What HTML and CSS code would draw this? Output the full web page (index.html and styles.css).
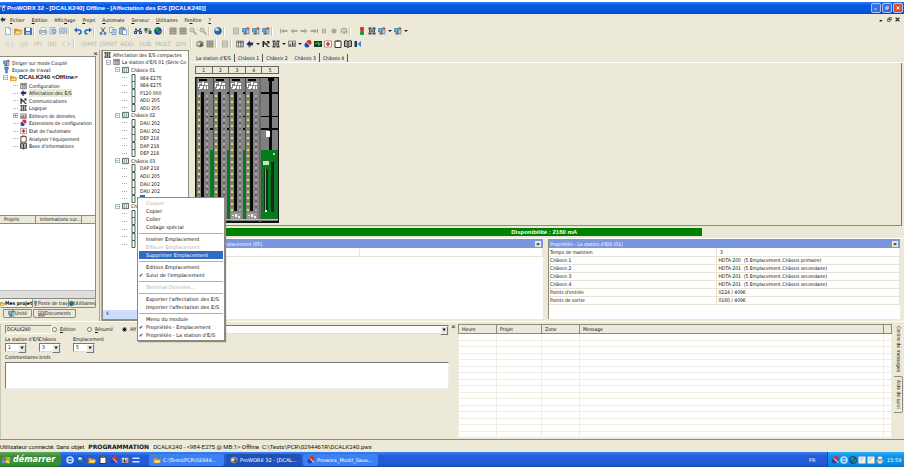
FILE: index.html
```html
<!DOCTYPE html>
<html lang="fr">
<head>
<meta charset="utf-8">
<title>ProWORX 32</title>
<link rel="stylesheet" href="styles.css">
</head>
<body>
<svg class="defs" aria-hidden="true">
  <symbol id="new" viewBox="0 0 16 16"><path d="M3 1h7l3 3v11H3z" fill="#fff" stroke="#57a"/><path d="M10 1v3h3" fill="#bcd" stroke="#57a"/></symbol>
  <symbol id="open" viewBox="0 0 16 16"><path d="M1 14V4h5l2 2h6v8z" fill="#e6a420" stroke="#a87414"/><path d="M1 14 4 8h12l-3 6z" fill="#ffe07a" stroke="#b8861c"/></symbol>
  <symbol id="save" viewBox="0 0 16 16"><path d="M1 2h13l1 1v12H1z" fill="#4a6cc8" stroke="#234"/><path d="M4 2h8v6H4z" fill="#fff"/><path d="M4 10h8v5H4z" fill="#bcd"/></symbol>
  <symbol id="print" viewBox="0 0 16 16"><path d="M4 1h8v6H4z" fill="#fff" stroke="#79a"/><path d="M1 7h14v6H1z" fill="#b7c5d2" stroke="#678"/><path d="M4 11h8v4H4z" fill="#fff" stroke="#79a"/></symbol>
  <symbol id="preview" viewBox="0 0 16 16"><path d="M2 1h10v13H2z" fill="#def" stroke="#68a"/><circle cx="10" cy="9" r="4" fill="#9cf" stroke="#456"/><path d="M4 4h6M4 6h4" stroke="#79b"/></symbol>
  <symbol id="book" viewBox="0 0 16 16"><path d="M1 3q4-2 7 0 4-2 7 0v10q-4-2-7 0-4-2-7 0z" fill="#cfe2f0" stroke="#57809c"/><path d="M8 3v10M3 6h3M10 6h3M3 9h3M10 9h3" stroke="#57809c"/></symbol>
  <symbol id="undo" viewBox="0 0 16 16"><path d="M3 6h7q4 0 4 4t-5 4" fill="none" stroke="#1a63c4" stroke-width="3"/><path d="M0 6 6 1v10z" fill="#1a63c4"/></symbol>
  <symbol id="redo" viewBox="0 0 16 16"><path d="M13 6H6q-4 0-4 4t5 4" fill="none" stroke="#1a63c4" stroke-width="3"/><path d="m16 6-6-5v10z" fill="#1a63c4"/></symbol>
  <symbol id="cut" viewBox="0 0 16 16"><path d="m4 1 7 10M12 1 5 11" stroke="#456" stroke-width="2"/><circle cx="4" cy="13" r="2" fill="none" stroke="#25a" stroke-width="2"/><circle cx="12" cy="13" r="2" fill="none" stroke="#25a" stroke-width="2"/></symbol>
  <symbol id="copy" viewBox="0 0 16 16"><path d="M1 1h8v10H1z" fill="#fff" stroke="#36a"/><path d="M6 5h8v10H6z" fill="#cfe2ff" stroke="#36a"/><path d="M8 8h4M8 11h4" stroke="#36a"/></symbol>
  <symbol id="paste" viewBox="0 0 16 16"><path d="M1 2h11v12H1z" fill="#8fb4e6" stroke="#357"/><path d="M4 1h5v3H4z" fill="#ccc" stroke="#555"/><path d="M7 6h8v9H7z" fill="#fff" stroke="#36a"/></symbol>
  <symbol id="find" viewBox="0 0 16 16"><path d="M2 3h4v4H2zM10 3h4v4h-4zM6 6h4v3H6zM0 8h6v6H0zM10 8h6v6h-6z" fill="#2c4c86"/><path d="M2 10h2v2H2zM12 10h2v2h-2z" fill="#9cf"/></symbol>
  <symbol id="swap" viewBox="0 0 16 16"><path d="M1 2h6v7H1zM9 7h6v7H9z" fill="#3c6a4e"/><path d="m9 3 4 1-3 2zM6 12l-4-1 3-2z" fill="#247"/></symbol>
  <symbol id="globe" viewBox="0 0 16 16"><circle cx="8" cy="8" r="7" fill="#1455c0" stroke="#123"/><path d="M4 3q5-2 6 1L8 8l-4 1zM9 9l4-2 1 3-4 4z" fill="#28a638"/></symbol>
  <symbol id="ball" viewBox="0 0 16 16"><circle cx="8" cy="8" r="7" fill="#2a6ab8" stroke="#1a3f78"/><ellipse cx="6" cy="5" rx="4" ry="3" fill="#b8e0ff"/></symbol>
  <symbol id="cube" viewBox="0 0 16 16"><path d="m1 4 7-3 7 3v8l-7 3-7-3z" fill="#8c8c84"/><path d="M3 5h5v5H3z" fill="#ddd"/><circle cx="11" cy="10" r="3" fill="#555"/></symbol>
  <symbol id="grid" viewBox="0 0 16 16"><path d="M1 1h14v14H1z" fill="#92907f"/><path d="M5 1v14M10 1v14M1 6h14M1 11h14" stroke="#b9b7a6"/></symbol>
  <symbol id="zoom" viewBox="0 0 16 16"><circle cx="6" cy="6" r="4" fill="#ddd9ca" stroke="#a3a193" stroke-width="2"/><path d="m9 9 6 6" stroke="#a3a193" stroke-width="3"/></symbol>
  <symbol id="pc" viewBox="0 0 16 16"><path d="M1 3h7v7H1z" fill="#59b5e0" stroke="#257"/><path d="M9 2h5v12H9z" fill="#9fd0e8" stroke="#368"/><path d="M3 11h6v4H3z" fill="#567"/><path d="m9 2 3-2 3 4-3 2z" fill="#e04030"/></symbol>
  <symbol id="dim" viewBox="0 0 16 16"><path d="M2 1h12v14H2z" fill="#b5b3a4"/><path d="M4 4h8M4 8h8M4 12h8" stroke="#dedbcc" stroke-width="2"/></symbol>
  <symbol id="left" viewBox="0 0 16 16"><path d="M1 8 7 3v3h8v4H7v3z" fill="#aaa89a"/></symbol>
  <symbol id="right" viewBox="0 0 16 16"><path d="M15 8 9 3v3H1v4h8v3z" fill="#aaa89a"/></symbol>
  <symbol id="first" viewBox="0 0 16 16"><path d="M0 3h2v10H0zM2 8l5-5v3h8v4H7v3z" fill="#aaa89a"/></symbol>
  <symbol id="last" viewBox="0 0 16 16"><path d="M14 3h2v10h-2zM14 8 9 3v3H1v4h8v3z" fill="#aaa89a"/></symbol>
  <symbol id="pause" viewBox="0 0 16 16"><path d="M4 3h3v10H4zM9 3h3v10H9z" fill="#aaa89a"/></symbol>
  <symbol id="rec" viewBox="0 0 16 16"><circle cx="8" cy="8" r="5" fill="#aaa89a"/></symbol>
  <symbol id="loop" viewBox="0 0 16 16"><path d="M3 12q-2-9 6-9 6 2 4 9" fill="none" stroke="#aaa89a" stroke-width="3"/><path d="M6 8h5v6H6z" fill="#aaa89a"/></symbol>
  <symbol id="light" viewBox="0 0 16 16"><path d="M5 0h6v16H5z" fill="#263"/><circle cx="8" cy="4" r="4" fill="#e03020"/><circle cx="8" cy="12" r="4" fill="#1b9a2c"/></symbol>
  <symbol id="net" viewBox="0 0 16 16"><path d="M1 1h5v4H1zM10 1h5v4h-5zM1 11h5v4H1zM10 11h5v4h-5z" fill="#454545"/><path d="M8 1v14M4 8h8M3 5v6M13 5v6" stroke="#454545" stroke-width="2"/></symbol>
  <symbol id="plc" viewBox="0 0 16 16"><path d="M1 2h14v11H1z" fill="#d7d3c6" stroke="#333"/><path d="M3 8h3v4H3z" fill="#c33"/><path d="M9 4v8M12 6v6" stroke="#356" stroke-width="2"/></symbol>
  <symbol id="rack" viewBox="0 0 16 16"><path d="M1 2h14v12H1z" fill="#ddd" stroke="#333"/><path d="M5 2v12M9 2v12M12 2v12M2 5h12" stroke="#333"/></symbol>
  <symbol id="arrowio" viewBox="0 0 16 16"><path d="m1 8 7-7v4h7l-2 6H9l-1 4z" fill="#1b2f66"/><path d="M5 11h4v4H5z" fill="#886"/></symbol>
  <symbol id="logic" viewBox="0 0 16 16"><path d="M1 2h3l8 10h3v2h-4L4 5v9H1zM9 2h6v5h-3z" fill="#222"/><path d="M4 8h8" stroke="#222" stroke-width="2"/></symbol>
  <symbol id="chart" viewBox="0 0 16 16"><path d="M1 3h14v11H1z" fill="#ece8e0" stroke="#534"/><path d="M4 7v6M7 5v8" stroke="#257" stroke-width="2"/><path d="M12 5v8M9 9v4" stroke="#b33" stroke-width="2"/></symbol>
  <symbol id="ext" viewBox="0 0 16 16"><circle cx="6" cy="10" r="5" fill="#1d46b4"/><circle cx="10" cy="5" r="5" fill="#d03030"/><path d="m6 5 8 8" stroke="#fff" stroke-width="2"/></symbol>
  <symbol id="screen" viewBox="0 0 16 16"><path d="M0 2h16v12H0z" fill="#1b3a28"/><path d="M2 7h4l2-3 2 7 1-4h3" stroke="#3c6" fill="none" stroke-width="2"/></symbol>
  <symbol id="health" viewBox="0 0 16 16"><path d="M1 2h14v12H1z" fill="#fff" stroke="#533"/><path d="M8 4v8M4 8h8" stroke="#d22" stroke-width="3"/></symbol>
  <symbol id="clip" viewBox="0 0 16 16"><path d="M2 2h12v13H2z" fill="#fff" stroke="#432" stroke-width="2"/><path d="M5 0h6v4H5z" fill="#765"/></symbol>
  <symbol id="info" viewBox="0 0 16 16"><path d="M1 2q4-2 7 1 4-3 7-1v11q-4-1-7 2-4-3-7-2z" fill="#aaa" stroke="#333" stroke-width="2"/><path d="M8 3v11" stroke="#333" stroke-width="2"/></symbol>
  <symbol id="flow" viewBox="0 0 16 16"><path d="M1 2h5v12H1z" fill="#236"/><path d="m7 8 7-6v12z" fill="#3a80d0"/></symbol>
  <symbol id="funnel" viewBox="0 0 16 16"><path d="M4 1h8v5l-2 3v6H6V9L4 6z" fill="#4a90dc" stroke="#246"/></symbol>
  <symbol id="chassis" viewBox="0 0 16 16"><path d="M1 2h14v12H1z" fill="#e8efe8" stroke="#455" stroke-width="2"/><path d="M5 2v12M10 2v12" stroke="#7a9a86" stroke-width="2"/></symbol>
  <symbol id="module" viewBox="0 0 16 16"><path d="M5 1h6v14H5z" fill="#fff" stroke="#465" stroke-width="2"/></symbol>
  <symbol id="win" viewBox="0 0 16 16"><path d="m1 3 6-1-1 5-6 1z" fill="#f05a28"/><path d="m8 2 7 1-1 5-7-1z" fill="#8bd33c"/><path d="m0 9 6-1-1 5-5 1z" fill="#4aa0f0"/><path d="m7 8 7 1-1 5-7-1z" fill="#ffd034"/></symbol>
  <symbol id="ie" viewBox="0 0 16 16"><circle cx="8" cy="8" r="6" fill="none" stroke="#b6e4ff" stroke-width="3"/><path d="M3 8h10" stroke="#fff" stroke-width="2"/></symbol>
  <symbol id="desk" viewBox="0 0 16 16"><path d="M1 3h14v3H1zM1 10h14v3H1z" fill="#cfe4ff"/></symbol>
  <symbol id="sheet" viewBox="0 0 16 16"><path d="M1 1h14v14H1z" fill="#f4f2e8"/><path d="M4 4h8M4 8h6" stroke="#a99" stroke-width="1"/></symbol>
</svg>

<header class="title">
  <svg class="ic" viewBox="0 0 16 16"><path d="M1 1h14v5H1zM6 6h6v9H6z" fill="#d8e4f4"/><path d="M3 3h4v2H3zM8 8h3v5H8z" fill="#345"/></svg>
  <h1>ProWORX 32 - [DCALK240] Offline - [Affectation des E/S [DCALK240]]</h1>
  <button class="wb" aria-label="Réduire"><svg viewBox="0 0 8 8"><path d="M1 5h4v2H1z" fill="#fff"/></svg></button>
  <button class="wb" aria-label="Restaurer"><svg viewBox="0 0 8 8"><path d="M3 1h4v4H3zM1 3h4v4H1z" fill="none" stroke="#fff"/></svg></button>
  <button class="wb close" aria-label="Fermer"><svg viewBox="0 0 8 8"><path d="m1 1 6 6M7 1 1 7" stroke="#fff" stroke-width="2"/></svg></button>
</header>

<nav class="menubar">
  <svg class="ic"><use href="#arrowio"/></svg>
  <button><u>F</u>ichier</button><button><u>E</u>dition</button><button>Affic<u>h</u>age</button><button><u>P</u>rojet</button><button><u>A</u>utomate</button><button><u>S</u>erveur</button><button><u>U</u>tilitaires</button><button>Fe<u>n</u>être</button><button><u>?</u></button>
  <span class="mdi"><svg viewBox="0 0 8 8"><path d="M1 5h4v2H1z"/></svg><svg viewBox="0 0 8 8"><path d="M3 1h4v3H3zM1 3h4v4H1z" fill="none" stroke="#222"/></svg><svg viewBox="0 0 8 8"><path d="m1 1 6 6M7 1 1 7" stroke="#222" stroke-width="2"/></svg></span>
</nav>

<div class="toolbar">
  <button aria-label="Nouveau"><svg><use href="#new"/></svg></button><button aria-label="Ouvrir"><svg><use href="#open"/></svg></button><button aria-label="Enregistrer"><svg><use href="#save"/></svg></button><i></i>
  <button aria-label="Imprimer"><svg><use href="#print"/></svg></button><button aria-label="Aperçu"><svg><use href="#preview"/></svg></button><button aria-label="Rapport"><svg><use href="#book"/></svg></button><i></i>
  <button aria-label="Annuler"><svg><use href="#undo"/></svg></button><button aria-label="Rétablir"><svg><use href="#redo"/></svg></button><i></i>
  <button aria-label="Couper"><svg><use href="#cut"/></svg></button><button aria-label="Copier"><svg><use href="#copy"/></svg></button><button aria-label="Coller"><svg><use href="#paste"/></svg></button><i></i>
  <button aria-label="Rechercher"><svg><use href="#find"/></svg></button><button aria-label="Remplacer"><svg><use href="#swap"/></svg></button><button aria-label="Réseau"><svg><use href="#globe"/></svg></button><i></i>
  <button aria-label="Grille"><svg><use href="#grid"/></svg></button><button aria-label="Table"><svg><use href="#grid"/></svg></button><button aria-label="Zoom avant"><svg><use href="#zoom"/></svg></button><button aria-label="Zoom arrière"><svg><use href="#zoom"/></svg></button><i></i>
  <button aria-label="Aide"><svg><use href="#ball"/></svg></button><i class="wide"></i>
  <button aria-label="Arrêt"><svg><use href="#dim"/></svg></button><button aria-label="Lire"><svg><use href="#pc"/></svg></button><button aria-label="Écrire"><svg><use href="#pc"/></svg></button><button aria-label="Comparer"><svg><use href="#pc"/></svg></button><i class="wide"></i>
  <button aria-label="Premier"><svg><use href="#first"/></svg></button><button aria-label="Précédent"><svg><use href="#left"/></svg></button><button aria-label="Suivant"><svg><use href="#right"/></svg></button><button aria-label="Dernier"><svg><use href="#last"/></svg></button><button aria-label="Pause"><svg><use href="#pause"/></svg></button><button aria-label="Marche"><svg><use href="#rec"/></svg></button><button aria-label="Boucle"><svg><use href="#loop"/></svg></button><i class="wide"></i>
  <button aria-label="Mode"><svg><use href="#light"/></svg></button><button aria-label="Liaison"><svg><use href="#net"/></svg></button><button aria-label="Poste"><svg><use href="#pc"/></svg></button><b class="caret"></b><button aria-label="Transfert"><svg><use href="#pc"/></svg></button><b class="caret"></b>
</div>

<div class="toolbar second">
  <button class="t">-| |-</button><button class="t">-|/|-</button><button class="t">(P)</button><button class="t">(N)</button><button class="t">-( )-</button><i></i>
  <button class="t w">-SHRT</button><button class="t w">|SHRT</button><button class="t m">ADD</button><button class="t m">SUB</button><button class="t m">MULT</button><button class="t m">DIV</button><i></i>
  <button aria-label="Module"><svg><use href="#cube"/></svg></button><button aria-label="Bloc"><svg><use href="#grid"/></svg></button><i></i><button aria-label="Feuille"><svg><use href="#dim"/></svg></button><i></i>
  <button aria-label="Configuration"><svg><use href="#rack"/></svg></button><button aria-label="Affectation"><svg><use href="#arrowio"/></svg></button><b class="caret"></b>
  <button aria-label="Communications"><svg><use href="#logic"/></svg></button><button aria-label="Logique"><svg><use href="#net"/></svg></button><b class="caret"></b>
  <button aria-label="Données"><svg><use href="#plc"/></svg></button><b class="caret"></b>
  <button aria-label="Extensions"><svg><use href="#ext"/></svg></button><button aria-label="Écran"><svg><use href="#screen"/></svg></button><button aria-label="État"><svg><use href="#health"/></svg></button><button aria-label="Analyser"><svg><use href="#clip"/></svg></button><button aria-label="Informations"><svg><use href="#info"/></svg></button><button aria-label="Échanges"><svg><use href="#flow"/></svg></button>
</div>

<main class="work">
  <aside class="dock">
    <div class="grip">×</div>
    <div class="dockbody">
      <ul class="tree">
        <li><svg><use href="#pc"/></svg>Diriger sur mode Couplé</li>
        <li><svg><use href="#funnel"/></svg>Espace de travail</li>
        <li class="l1"><em>−</em><svg><use href="#open"/></svg><strong>DCALK240 &lt;Offline&gt;</strong></li>
        <li class="l2"><em></em><svg><use href="#rack"/></svg>Configuration</li>
        <li class="l2"><em></em><svg><use href="#arrowio"/></svg><span class="cur">Affectation des E/S</span></li>
        <li class="l2"><em></em><svg><use href="#logic"/></svg>Communications</li>
        <li class="l2"><em></em><svg><use href="#net"/></svg>Logique</li>
        <li class="l2"><em>+</em><svg><use href="#chart"/></svg>Editeurs de données</li>
        <li class="l2"><em></em><svg><use href="#ext"/></svg>Extensions de configuration</li>
        <li class="l2"><em></em><svg><use href="#health"/></svg>Etat de l'automate</li>
        <li class="l2"><em></em><svg><use href="#clip"/></svg>Analyser l'équipement</li>
        <li class="l2"><em></em><svg><use href="#info"/></svg>Base d'informations</li>
      </ul>
      <div class="cols"><span>Projets</span><span>Informations sur...</span><span></span></div>
      <div class="list"></div>
      <div class="hbar"></div>
    </div>
    <div class="docktabs">
      <button class="on"><svg><use href="#open"/></svg>Mes projet</button><button><svg><use href="#funnel"/></svg>Poste de trav</button><button><svg><use href="#globe"/></svg>Utilitaires</button>
    </div>
    <div class="docktabs low">
      <button><svg><use href="#pc"/></svg>Unité</button><button><svg><use href="#chart"/></svg>Documents</button>
    </div>
  </aside>

  <section class="iotree">
    <ul class="tree big">
      <li><svg><use href="#net"/></svg>Affectation des E/S compactes</li>
      <li class="l1"><em>−</em><svg><use href="#rack"/></svg>La station d'E/S 01 (Série Co</li>
      <li class="l3"><em>−</em><svg><use href="#chassis"/></svg>Châssis 01</li>
      <li class="l4"><em></em><svg><use href="#module"/></svg>984-E275</li>
      <li class="l4"><em></em><svg><use href="#module"/></svg>984-E275</li>
      <li class="l4"><em></em><svg><use href="#module"/></svg>P120 000</li>
      <li class="l4"><em></em><svg><use href="#module"/></svg>ADU 205</li>
      <li class="l4"><em></em><svg><use href="#module"/></svg>ADU 205</li>
      <li class="l3"><em>−</em><svg><use href="#chassis"/></svg>Châssis 02</li>
      <li class="l4"><em></em><svg><use href="#module"/></svg>DAU 202</li>
      <li class="l4"><em></em><svg><use href="#module"/></svg>DAU 202</li>
      <li class="l4"><em></em><svg><use href="#module"/></svg>DEP 218</li>
      <li class="l4"><em></em><svg><use href="#module"/></svg>DAP 218</li>
      <li class="l4"><em></em><svg><use href="#module"/></svg>DEP 218</li>
      <li class="l3"><em>−</em><svg><use href="#chassis"/></svg>Châssis 03</li>
      <li class="l4"><em></em><svg><use href="#module"/></svg>DAP 218</li>
      <li class="l4"><em></em><svg><use href="#module"/></svg>ADU 205</li>
      <li class="l4"><em></em><svg><use href="#module"/></svg>DAU 202</li>
      <li class="l4"><em></em><svg><use href="#module"/></svg>DAU 202</li>
      <li class="l4"><em></em><svg><use href="#module"/></svg><span class="sel"></span></li>
      <li class="l3"><em>−</em><svg><use href="#chassis"/></svg>Ch</li>
      <li class="l4"><em></em><svg><use href="#module"/></svg></li>
      <li class="l4"><em></em><svg><use href="#module"/></svg></li>
      <li class="l4"><em></em><svg><use href="#module"/></svg></li>
      <li class="l4"><em></em><svg><use href="#module"/></svg></li>
      <li class="l4"><em></em><svg><use href="#module"/></svg></li>
    </ul>
    <div class="scroll"><span>‹</span></div>
    <menu class="context">
      <li class="off">Couper</li><li>Copier</li><li>Coller</li><li>Collage spécial</li>
      <li class="sep"></li>
      <li>Insérer Emplacement</li><li class="off">Effacer Emplacement</li><li class="hot">Supprimer Emplacement</li>
      <li class="sep"></li>
      <li>Edition Emplacement</li><li class="chk">Suivi de l'emplacement</li>
      <li class="sep"></li>
      <li class="off">Terminal Données...</li>
      <li class="sep"></li>
      <li>Exporter l'affectation des E/S</li><li>Importer l'affectation des E/S</li>
      <li class="sep"></li>
      <li>Menu du module</li><li class="chk">Propriétés - Emplacement</li><li class="chk">Propriétés - La station d'E/S</li>
    </menu>
  </section>

  <section class="view">
    <div class="tabs"><button>La station d'E/S</button><button>Châssis 1</button><button class="nb">Châssis 2</button><button class="on">Châssis 3</button><button>Châssis 4</button></div>
    <div class="page">
      <div class="slots"><span>1</span><span>2</span><span>3</span><span>4</span><span>5</span></div>
      <svg class="chassis" viewBox="0 0 84 146" role="img" aria-label="Châssis 3">
        <defs>
          <pattern id="led" width="14" height="6" patternUnits="userSpaceOnUse" y="17"><rect x="2" y="1" width="2" height="2" fill="#e0e43c"/><rect x="2" y="4" width="2" height="1" fill="#666"/><circle cx="11" cy="2" r="1" fill="#b5b5b5"/><circle cx="11" cy="5" r="1" fill="#5c5c5c"/></pattern>
          <g id="mod">
            <path d="M0 1h14v143H0z" fill="#838383"/><path d="M0 1h1v143H0z" fill="#4a4a4a"/>
            <path d="M3 2h8v2H3z" fill="#000"/><path d="M2 6h3v1H3v3H2zM6 5h2v3H6zM9 6h3v2H9zM4 9h3v2H4zM8 9h2v3H8zM3 11h3v1H3zM11 9h1v3h-1z" fill="#fff"/>
            <path d="M0 17h14v118H0z" fill="url(#led)"/>
            <path d="M5 15h3v119H5z" fill="#080808"/><path d="M2 136h10v7H2z" fill="#9a9a9a"/><path d="M3 138h2v1H3zM6 137h2v3H6zM9 139h2v2H9z" fill="#eee"/>
          </g>
        </defs>
        <path d="M0 0h84v146H0z" fill="#111"/><path d="M1 1h82v143H1z" fill="#808080"/>
        <path d="M0 15h84v2H0zM0 39h84v1H0zM0 51h84v2H0zM74 1h3v73h-3z" fill="#080808"/>
        <path d="M1 73h82v69H1z" fill="#087a20"/>
        <use href="#mod" x="1"/><use href="#mod" x="18"/><use href="#mod" x="34"/><use href="#mod" x="50"/>
        <path d="M64 1h2v144h-2z" fill="#6a6a6a"/><path d="M71 54h4v6h-4z" fill="#fff"/><path d="M73 1h6v3h-6z" fill="#000"/>
        <circle cx="79" cy="77" r="1" fill="#eee"/><path d="M68 84h6v4h-6z" fill="#cde0cd"/><path d="M69 92h4v42h-4zM76 85h3v50h-3z" fill="#162a18"/><path d="M70 92h1v42h-1z" fill="#5b8"/><path d="M70 133h2v2h-2z" fill="#fff"/>
        <path d="M1 142h82v1H1z" fill="#bbb"/>
      </svg>
    </div>
    <div class="power"><div class="fill">Disponibilité : 2160 mA</div></div>
    <div class="props">
      <section class="prop">
        <h2>Propriétés - Emplacement (05)<button aria-label="Fermer">×</button></h2>
        <table><tr><td></td><td></td></tr></table>
      </section>
      <section class="prop wide">
        <h2>Propriétés - La station d'E/S (01)<button aria-label="Fermer">×</button></h2>
        <table>
          <tr><td>Temps de maintien</td><td>&nbsp;3</td></tr>
          <tr><td>Châssis 1</td><td>HDTA-200&nbsp; (5 Emplacement Châssis primaire)</td></tr>
          <tr><td>Châssis 2</td><td>HDTA-201&nbsp; (5 Emplacement Châssis secondaire)</td></tr>
          <tr><td>Châssis 3</td><td>HDTA-201&nbsp; (5 Emplacement Châssis secondaire)</td></tr>
          <tr><td>Châssis 4</td><td>HDTA-201&nbsp; (5 Emplacement Châssis secondaire)</td></tr>
          <tr><td>Points d'entrée</td><td>0224 / 4096</td></tr>
          <tr><td>Points de sortie</td><td>0160 / 4096</td></tr>
        </table>
      </section>
    </div>
  </section>
</main>

<section class="bottom">
  <form class="editor">
    <div class="line">
      <output class="sunk">DCALK240</output>
      <label><input type="radio" name="m"><span><u>E</u>dition</span></label>
      <label><input type="radio" name="m"><span><u>R</u>ésumé</span></label>
      <label><input type="radio" name="m" checked><span>Aff</span></label>
      <span class="pick grow"><select aria-label="Adresse"><option></option></select></span>
    </div>
    <div class="fields">
      <label>La station d'E/S<span class="pick"><select><option>1</option></select></span></label>
      <label>Châssis<span class="pick"><select><option>3</option></select></span></label>
      <label>Emplacement<span class="pick"><select><option>5</option></select></span></label>
    </div>
    <label class="notes">Commentaires brefs<textarea></textarea></label>
  </form>
  <div class="grip">×</div>
  <table class="msgs">
    <colgroup><col class="c1"><col class="c2"><col class="c3"><col><col class="c5"></colgroup>
    <thead><tr><th>Heure</th><th>Projet</th><th>Zone</th><th>Message</th><th></th></tr></thead>
    <tbody>
      <tr><td></td><td></td><td></td><td></td><td></td></tr><tr><td></td><td></td><td></td><td></td><td></td></tr>
      <tr><td></td><td></td><td></td><td></td><td></td></tr><tr><td></td><td></td><td></td><td></td><td></td></tr>
      <tr><td></td><td></td><td></td><td></td><td></td></tr><tr><td></td><td></td><td></td><td></td><td></td></tr>
      <tr><td></td><td></td><td></td><td></td><td></td></tr><tr><td></td><td></td><td></td><td></td><td></td></tr>
      <tr><td></td><td></td><td></td><td></td><td></td></tr><tr><td></td><td></td><td></td><td></td><td></td></tr>
      <tr><td></td><td></td><td></td><td></td><td></td></tr><tr><td></td><td></td><td></td><td></td><td></td></tr>
      <tr><td></td><td></td><td></td><td></td><td></td></tr><tr><td></td><td></td><td></td><td></td><td></td></tr>
      <tr><td></td><td></td><td></td><td></td><td></td></tr><tr><td></td><td></td><td></td><td></td><td></td></tr>
    </tbody>
  </table>
  <div class="vtabs"><button class="on">Centre de messages</button><button>Aide de suivi</button></div>
</section>

<footer class="status"><span>Utilisateur connecté: Sans objet</span><strong>PROGRAMMATION</strong><span>DCALK240 - &lt;984-E275 @ MB:1&gt; Offline&nbsp; C:\Tests\PCR\0294461R\DCALK240.pwx</span></footer>

<nav class="taskbar">
  <button class="start"><svg><use href="#win"/></svg>démarrer</button>
  <div class="quick"><svg><use href="#ie"/></svg><svg><use href="#ball"/></svg><svg><use href="#open"/></svg><svg><use href="#clip"/></svg><svg><use href="#ext"/></svg><svg><use href="#chart"/></svg><svg><use href="#desk"/></svg></div>
  <div class="tasks"><button><svg><use href="#open"/></svg>C:\Tests\PCR\02944...</button><button class="on"><svg><use href="#cube"/></svg>ProWORX 32 - [DCAL...</button><button><svg><use href="#ext"/></svg>Proworx_Modif_Sauv...</button></div>
  <span class="lang">FR</span>
  <div class="tray"><svg><use href="#ext"/></svg><svg><use href="#ie"/></svg><svg><use href="#globe"/></svg><svg><use href="#sheet"/></svg><svg><use href="#sheet"/></svg><svg><use href="#print"/></svg><time>15:59</time></div>
</nav>
</body>
</html>
```
FILE: styles.css
```css
* { box-sizing: border-box; }
html, body { height: 100%; }
body {
  --face: #ece9d8;
  --line: #8e8b7c;
  --small: "DejaVu Sans Condensed", "DejaVu Sans", sans-serif;
  --ui: "Liberation Sans", sans-serif;
  margin: 0;
  padding: 2px 3px 0 0;
  display: flex;
  flex-direction: column;
  background: #fff;
  color: #111;
  font: 5px/8px var(--small);
  white-space: nowrap;
  overflow: hidden;
}
button, input, select, textarea, table { font: inherit; color: inherit; }
button { margin: 0; padding: 0; border: 0; background: none; }
ul, menu { margin: 0; padding: 0; list-style: none; }
h1, h2 { margin: 0; font: inherit; }
svg { display: block; flex: none; width: 8px; height: 8px; }
.defs { position: absolute; width: 0; height: 0; }

.title {
  flex: none;
  display: flex;
  align-items: center;
  gap: 1px;
  height: 12px;
  padding-right: 1px;
  background: linear-gradient(#2b7cf4, #0855e2 30%, #0455e0 80%, #0347c4);
  color: #fff;
}
.title .ic { width: 6px; }
.title h1 { flex: 1; font: bold 6px/8px var(--ui); }
.wb { width: 10px; height: 10px; padding: 2px; border: 1px solid #a9c3f5; border-radius: 2px; background: #3a6fe2; }
.wb svg { width: 4px; height: 4px; }
.wb.close { background: #dd4f2b; }

.menubar { flex: none; display: flex; align-items: center; gap: 7px; height: 11px; padding-right: 4px; background: var(--face); }
.menubar .ic { width: 6px; height: 7px; margin-right: -3px; }
.mdi { display: flex; gap: 3px; margin-left: auto; }
.mdi svg { width: 5px; height: 5px; }

.toolbar { flex: none; display: flex; align-items: center; height: 12px; padding-left: 3px; background: var(--face); }
.toolbar.second { height: 13px; }
.toolbar button { display: flex; justify-content: center; width: 10px; }
.toolbar i { width: 5px; height: 9px; border-left: 1px solid #c9c6b5; background: linear-gradient(90deg, #fff 1px, transparent 1px); }
.toolbar i.wide { width: 8px; }
.toolbar .t { width: 14px; color: #b9b6a6; font: 6px/8px "DejaVu Sans", sans-serif; }
.toolbar .w { width: 20px; }
.toolbar .m { width: 18px; }
.caret { width: 4px; height: 2px; margin: 0 1px; border: 2px solid transparent; border-top-color: #222; border-bottom: 0; }

.work { flex: 1; display: flex; min-height: 0; background: var(--face); }
.dock { flex: none; width: 102px; display: flex; flex-direction: column; border-right: 3px double #aaa797; }
.grip { font: 8px/7px var(--ui); }
.dock .grip { height: 6px; text-align: right; padding-right: 1px; }
.dockbody { flex: 1; display: flex; flex-direction: column; width: 96px; background: #fff; border: 1px solid var(--line); border-left: 0; }
.tree { display: grid; grid-auto-rows: 1fr; height: 91px; margin-top: 2px; overflow: hidden; }
.tree.big { height: 197px; }
.iotree .tree { margin-top: 0; }
.tree li { display: flex; align-items: center; gap: 1px; min-height: 0; padding-left: 3px; }
.tree li svg { width: 7px; height: 8px; margin-right: 1px; }
.tree em {
  flex: none; width: 5px; height: 5px; border: 1px solid #aeb6c0; background: #fff;
  font: 5px/3px var(--ui); text-align: center; margin-right: 1px;
}
.tree em:empty { height: 1px; border: 0; border-top: 1px dotted #aaa; }
.tree .l1 { padding-left: 3px; }
.tree .l2 { padding-left: 13px; }
.tree strong { font: bold 6px/7px var(--ui); }
.cur { background: var(--face); }
.sel { width: 5px; height: 7px; background: #316ac5; }
.cols { display: flex; height: 9px; margin-top: auto; background: var(--face); border: 1px solid var(--line); border-width: 1px 0; line-height: 7px; }
.cols span { padding-left: 4px; border-right: 1px solid var(--line); }
.cols span:first-child { width: 36px; }
.cols span:nth-child(2) { width: 46px; }
.cols span:last-child { border: 0; }
.list { height: 66px; }
.hbar { height: 8px; background: #dedede; border-top: 1px solid #bbb; }
.docktabs { display: flex; height: 10px; }
.docktabs button { display: flex; align-items: center; height: 9px; border: 1px solid var(--line); border-top-color: transparent; border-left: 0; border-radius: 0 0 2px 2px; line-height: 7px; }
.docktabs .on { font-weight: bold; background: #f8f7f1; }
.docktabs svg { width: 5px; height: 7px; }
.docktabs.low { height: 12px; padding-left: 3px; gap: 1px; }
.docktabs.low button { padding: 0 4px; border: 1px solid var(--line); }
.docktabs.low svg { width: 7px; }

.iotree { flex: none; position: relative; width: 87px; display: flex; flex-direction: column; background: #fff; border: 1px solid var(--line); border-bottom-width: 2px; }
.iotree .tree li { padding-left: 1px; }
.iotree .tree .l1 { padding-left: 3px; }
.iotree .tree .l3 { padding-left: 12px; }
.iotree .tree .l4 { padding-left: 19px; }
.iotree .tree .l4 svg { width: 9px; }
.scroll { height: 9px; margin-top: auto; background: #cfdcfb; border-radius: 1px; color: #36a; font: bold 9px/7px var(--ui); padding-left: 3px; }
.context {
  position: absolute; z-index: 5; left: 34px; top: 146px; width: 88px; padding: 1px;
  background: #fff; border: 1px solid #8c8a80; box-shadow: 1px 1px 1px #888;
  font: 5px/8px "DejaVu Sans", sans-serif;
}
.context li { height: 8px; padding-left: 7px; }
.context .off { color: #b5b2a4; }
.context .hot { background: #316ac5; color: #fff; }
.context .sep { height: 4px; padding: 0; background: linear-gradient(#b5b2a4, #b5b2a4) center / 84px 1px no-repeat; }
.context .chk { padding-left: 0; }
.context .chk::before { content: "✔"; display: inline-block; width: 7px; line-height: 7px; }

.view { flex: 1; min-width: 0; display: flex; flex-direction: column; padding-left: 2px; }
.tabs { display: flex; align-items: flex-end; height: 13px; padding-left: 3px; border-bottom: 1px solid #fff; }
.tabs button { padding: 0 3px 0 2px; height: 8px; border-right: 1px solid #555; margin-right: 1px; }
.tabs .nb { border-color: transparent; }
.tabs .on { height: 9px; }
.page { flex: 1; padding: 3px 4px 0; margin-right: 2px; border-right: 1px solid #777; border-bottom: 1px solid var(--line); overflow: hidden; }
.slots { display: flex; width: 84px; height: 8px; border: 1px solid #666; line-height: 6px; text-align: center; margin-bottom: 3px; }
.slots span { flex: 1; border-right: 1px solid #666; }
.slots span:last-child { border: 0; }
.page .chassis { width: 84px; height: 146px; }
.power { padding: 2px 3px 2px 0; border-bottom: 1px solid #fff; }
.fill { width: 72%; height: 8px; padding-right: 125px; text-align: right; background: #008000; color: #fff; font: bold 6px/8px var(--ui); }
.props { flex: none; display: flex; gap: 5px; height: 80px; padding-right: 4px; margin-bottom: 2px; }
.prop { flex: 1; background: #fff; border-left: 1px solid var(--line); }
.prop h2 { display: flex; justify-content: space-between; align-items: center; height: 9px; padding: 0 2px 0 1px; background: #7a96df; color: #fff; }
.prop h2 button { width: 6px; height: 6px; background: var(--face); color: #000; font: bold 6px/6px var(--ui); }
.prop table { width: 100%; border-spacing: 0; table-layout: fixed; padding-top: 1px; }
.prop td { height: 8px; padding: 0 0 0 1px; line-height: 7px; border-bottom: 1px solid #e6e3d6; border-right: 1px solid #e6e3d6; }
.prop td:first-child { width: 48%; }

.bottom { flex: none; display: flex; height: 119px; padding-top: 2px; background: var(--face); border-top: 1px solid #fff; border-bottom: 1px solid var(--line); }
.editor { flex: 1; min-width: 0; padding-left: 4px; border-left: 1px solid #c9c6b5; }
.line { display: flex; align-items: center; height: 10px; }
.sunk { width: 47px; height: 9px; padding-left: 1px; border: 1px solid var(--line); border-right-color: #fff; border-bottom-color: #fff; line-height: 7px; }
.line label { display: flex; align-items: center; gap: 3px; width: 35px; }
.line input { appearance: none; margin: 0; width: 5px; height: 5px; border: 1px solid #777; border-radius: 50%; background: #fff; }
.line input:checked { background: radial-gradient(#000 1px, #fff 2px); }
.pick { position: relative; display: block; width: 22px; height: 9px; }
.pick.grow { flex: 1; width: auto; }
.pick select { display: block; appearance: none; width: 100%; height: 9px; padding: 0 2px; background: #fff; border: 1px solid; border-color: #777 #ddd #ddd #777; border-radius: 0; line-height: 7px; }
.pick::after { content: "▼"; position: absolute; right: 1px; top: 1px; width: 6px; height: 7px; background: var(--face); border: 1px solid; border-color: #fff #777 #777 #fff; font: 4px/5px "DejaVu Sans", sans-serif; text-align: center; pointer-events: none; }
.fields { display: flex; gap: 12px; padding-top: 1px; }
.fields label { width: 22px; }
.notes { display: block; padding-top: 1px; }
.notes textarea { display: block; width: 100%; height: 27px; margin: 1px 0 0; padding: 1px; resize: none; background: #fff; border: 1px solid; border-color: #777 #eee #eee #777; border-radius: 0; }
.bottom .grip { width: 9px; padding-left: 2px; line-height: 6px; }
.msgs { flex: none; width: 48%; height: 114px; table-layout: fixed; border-collapse: collapse; background: #fff; border: 1px solid var(--line); }
.msgs th { height: 9px; padding: 0 0 0 3px; background: var(--face); border: 1px solid var(--line); font-weight: normal; text-align: left; line-height: 7px; }
.msgs td { padding: 0; border: 1px solid #efede2; }
.c1 { width: 38px; }
.c2 { width: 45px; }
.c3 { width: 38px; }
.c5 { width: 8px; }
.vtabs { width: 12px; display: flex; flex-direction: column; align-items: flex-start; padding-left: 2px; }
.vtabs button { writing-mode: vertical-rl; width: 9px; padding: 3px 0; border: 1px solid var(--line); border-left: 0; border-radius: 0 2px 2px 0; line-height: 7px; }
.vtabs .on { border-color: transparent; padding-top: 1px; }

.status { flex: none; display: flex; align-items: center; gap: 4px; height: 12px; background: var(--face); font: 6px/9px Roboto, sans-serif; }
.status strong { font: bold 6px/9px "DejaVu Sans", sans-serif; }

.taskbar { flex: none; display: flex; align-items: center; height: 15px; background: linear-gradient(#3c82f0, #245ddb 25%, #225ad6 80%, #1b47ae); color: #fff; font: 5px/8px "DejaVu Sans", sans-serif; }
.start { display: flex; align-items: center; gap: 2px; width: 61px; height: 100%; padding-left: 2px; background: linear-gradient(#5eac56, #3c873c 30%, #38923a 80%, #2b6e2b); border-radius: 0 4px 4px 0; color: #fff; font: italic bold 8px/12px "DejaVu Sans", sans-serif; }
.start svg { width: 9px; height: 10px; }
.quick { display: flex; gap: 3px; padding: 0 9px 0 5px; }
.tasks { display: flex; gap: 2px; flex: 1; }
.tasks button { display: flex; align-items: center; gap: 2px; width: 75px; height: 12px; padding-left: 4px; border-radius: 2px; background: #3c81f3; }
.tasks .on { background: #1e52b7; }
.lang { width: 18px; }
.tray { display: flex; align-items: center; gap: 1px; height: 100%; width: 77px; padding-left: 3px; background: linear-gradient(#2eb0f5, #1290e9 30%, #0f8be2 80%, #0b6ec0); border-left: 1px solid #0a4aa0; }
.tray time { margin-left: 2px; }
```
